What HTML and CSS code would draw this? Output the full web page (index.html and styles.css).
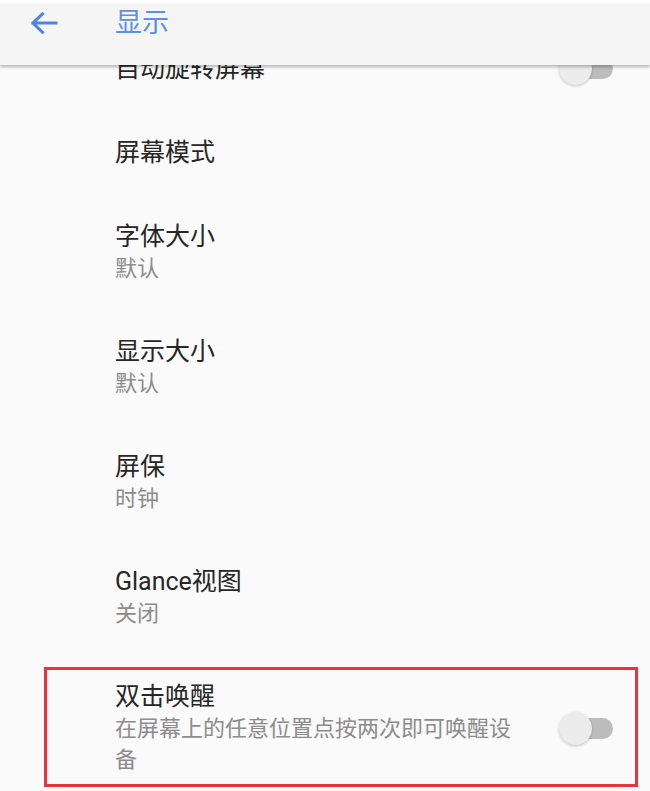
FILE: index.html
```html
<!DOCTYPE html>
<html lang="zh-CN">
<head>
<meta charset="utf-8">
<title>显示</title>
<link rel="stylesheet" href="styles.css">
</head>
<body>
<div class="screen">
  <header class="appbar">
    <svg class="back" width="28" height="22" viewBox="0 0 28 22" aria-hidden="true">
      <path d="M26 11 H3 M12.5 1.8 L3 11 L12.5 20.2" fill="none" stroke="#4a86e8" stroke-width="3" stroke-linecap="square" stroke-linejoin="miter"/>
    </svg>
    <h1 class="appbar-title">显示</h1>
  </header>
  <main class="list">
    <div class="item">
      <div class="text"><div class="title">自动旋转屏幕</div></div>
      <div class="switch"><span class="track"></span><span class="thumb"></span></div>
    </div>
    <div class="item">
      <div class="text"><div class="title">屏幕模式</div></div>
    </div>
    <div class="item">
      <div class="text"><div class="title">字体大小</div><div class="sub">默认</div></div>
    </div>
    <div class="item">
      <div class="text"><div class="title">显示大小</div><div class="sub">默认</div></div>
    </div>
    <div class="item">
      <div class="text"><div class="title">屏保</div><div class="sub">时钟</div></div>
    </div>
    <div class="item">
      <div class="text"><div class="title">Glance视图</div><div class="sub">关闭</div></div>
    </div>
    <div class="item item-marked">
      <div class="text"><div class="title">双击唤醒</div><div class="sub">在屏幕上的任意位置点按两次即可唤醒设备</div></div>
      <div class="switch"><span class="track"></span><span class="thumb"></span></div>
      <div class="highlight"></div>
    </div>
  </main>
</div>
</body>
</html>
```
FILE: styles.css
```css
html, body {
  margin: 0;
  padding: 0;
  height: 791px;
  overflow: hidden;
  background: #fafafa;
}
body {
  font-family: Roboto, "Noto Sans CJK SC", "Noto Sans", sans-serif;
}
.screen {
  position: relative;
  width: 650px;
  height: 791px;
  overflow: hidden;
  background: #fafafa;
}
.appbar {
  position: absolute;
  top: 0;
  left: 0;
  right: 0;
  height: 65px;
  box-sizing: border-box;
  border-top: 3px solid #fdfdfd;
  background: #f5f5f5;
  box-shadow: 0 2px 3px rgba(0, 0, 0, 0.28);
  display: flex;
  align-items: center;
  padding: 0 0 22px 30px;
  z-index: 2;
}
.back {
  display: block;
  flex: none;
}
.appbar-title {
  margin: 0 0 0 57px;
  font-size: 27px;
  font-weight: 400;
  color: #5a8fea;
  line-height: 32px;
}
.list {
  padding-top: 26px;
}
.item {
  position: relative;
  display: flex;
  align-items: center;
  padding: 26px 37px 26px 115px;
}
.text {
  flex: 1;
  min-width: 0;
}
.title {
  font-size: 25px;
  line-height: 32px;
  color: #262626;
}
.sub {
  font-size: 22px;
  line-height: 31px;
  color: #8c8c8c;
}
.switch {
  position: relative;
  flex: none;
  width: 54px;
  height: 33px;
  margin-left: 32px;
}
.track {
  position: absolute;
  right: 0;
  top: 6px;
  width: 46px;
  height: 21px;
  border-radius: 11px;
  background: #bcbcbc;
}
.thumb {
  position: absolute;
  left: 0;
  top: 0;
  width: 33px;
  height: 33px;
  border-radius: 50%;
  background: #ececec;
  box-shadow: 0 1px 3px rgba(0, 0, 0, 0.22);
}
.highlight {
  position: absolute;
  left: 44px;
  right: 12px;
  top: 12px;
  bottom: 14px;
  border: 3px solid #e8353c;
  pointer-events: none;
}
```
